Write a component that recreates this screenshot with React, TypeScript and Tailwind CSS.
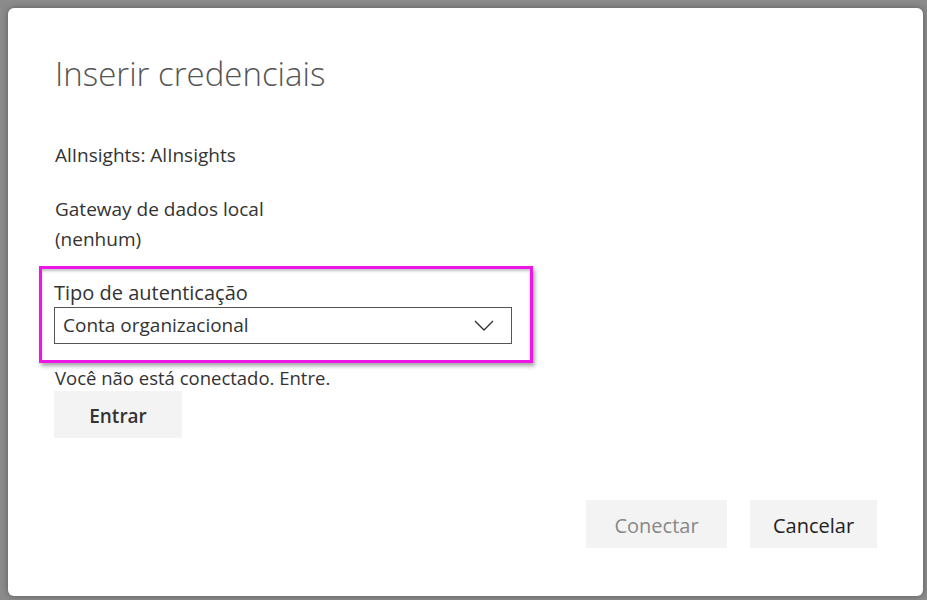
import React from 'react';

const ChevronDown: React.FC = () => (
  <svg width="20" height="11" viewBox="0 0 20 11" fill="none">
    <path d="M1 1l9 9 9-9" stroke="#333" strokeWidth="1.4" />
  </svg>
);

const App: React.FC = () => {
  return (
    <div className="w-[927px] h-[600px] bg-[#8b8b8b] pl-[8px] pt-[8px] pr-[4px] pb-[4px] font-['Open_Sans',sans-serif]">
      <div className="w-full h-full bg-white rounded-[6px] shadow-[0_0_6px_rgba(0,0,0,0.35)] flex flex-col pl-[47px] pr-[46px]">
        {/* title */}
        <h1 className="mt-[44px] text-[33px] leading-[44px] font-light text-[#555]">Inserir credenciais</h1>

        <div className="mt-[45px] text-[19px] leading-[28px] text-[#333]">AlInsights: AlInsights</div>

        <div className="mt-[25px] text-[19px] leading-[30px] text-[#333]">
          <div>Gateway de dados local</div>
          <div>(nenhum)</div>
        </div>

        {/* destaque */}
        <div className="mt-[12px] -ml-[16px] w-[494px] border-[3px] border-[#ee16e6] shadow-[2px_3px_4px_rgba(0,0,0,0.35),inset_0_2px_3px_rgba(0,0,0,0.25)] pl-[12px] pr-[18px] pt-[11px] pb-[16px]">
          <div className="text-[20px] leading-[26px] text-[#333]">Tipo de autenticação</div>
          <div className="mt-[1px] h-[37px] border border-[#555] flex items-center justify-between pl-[8px] pr-[17px]">
            <span className="text-[19px] text-[#333]">Conta organizacional</span>
            <ChevronDown />
          </div>
        </div>

        <div className="mt-[2px] text-[18.5px] leading-[26px] text-[#333]">Você não está conectado. Entre.</div>
        <button className="-ml-px w-[128px] h-[47px] pt-[3px] bg-[#f3f3f3] text-[19px] font-semibold text-[#333]">Entrar</button>

        <div className="mt-auto mb-[48px] flex justify-end gap-[23px]">
          <button className="w-[141px] h-[48px] pt-[3px] bg-[#f3f3f3] text-[20px] text-[#888]">Conectar</button>
          <button className="w-[127px] h-[48px] pt-[3px] bg-[#f3f3f3] text-[20px] text-[#222]">Cancelar</button>
        </div>
      </div>
    </div>
  );
};

export default App;
